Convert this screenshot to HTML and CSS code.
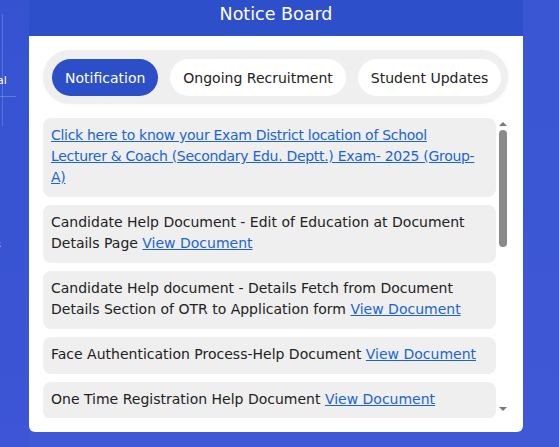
FILE: index.html
```html
<!DOCTYPE html>
<html lang="en">
<head>
  <meta charset="UTF-8">
  <title>Notice Board</title>
  <link rel="stylesheet" href="styles.css">
</head>
<body>
<div class="page">
  <!-- Striscia laterale del menu -->
  <aside class="side-menu">
    <span class="side-line"></span>
    <span class="side-text side-text-top">al</span>
    <span class="side-rule"></span>
    <span class="side-text side-text-mid">s</span>
  </aside>

  <section class="board">
    <header class="board-head">
      <h2 class="board-title">Notice Board</h2>
    </header>
    <div class="board-body">
      <div class="tabs">
        <button class="tab active">Notification</button>
        <button class="tab">Ongoing Recruitment</button>
        <button class="tab">Student Updates</button>
      </div>

      <div class="feed">
        <ul class="feed-list">
          <li class="feed-item feed-item-link">
            <a href="#">Click here to know your Exam District location of School Lecturer &amp; Coach (Secondary Edu. Deptt.) Exam- 2025 (Group-A)</a>
          </li>
          <li class="feed-item">
            Candidate Help Document - Edit of Education at Document Details Page <a href="#">View Document</a>
          </li>
          <li class="feed-item">
            Candidate Help document - Details Fetch from Document Details Section of OTR to Application form <a href="#">View Document</a>
          </li>
          <li class="feed-item">
            Face Authentication Process-Help Document <a href="#">View Document</a>
          </li>
          <li class="feed-item">
            One Time Registration Help Document <a href="#">View Document</a>
          </li>
        </ul>
        <div class="scroll">
          <span class="scroll-arrow up"></span>
          <span class="scroll-thumb"></span>
          <span class="scroll-track"></span>
          <span class="scroll-arrow down"></span>
        </div>
      </div>
    </div>
  </section>
</div>
</body>
</html>
```

FILE: styles.css
```css
/* Base */
html, body {
  margin: 0;
  height: 100%;
}

body {
  background: linear-gradient(180deg, #3a56d2, #3f58d6);
  font-family: "DejaVu Sans", "Noto Sans", sans-serif;
  color: #222;
  overflow: hidden;
}

.page {
  display: flex;
  height: 447px;
}

/* Menu laterale */
.side-menu {
  position: relative;
  width: 29px;
  flex-shrink: 0;
  background: linear-gradient(180deg, #3553d0, #3d55d6);
}

.side-line {
  position: absolute;
  left: 2px;
  top: 14px;
  width: 1px;
  height: 112px;
  background: rgba(255, 255, 255, 0.18);
}

.side-rule {
  position: absolute;
  left: 0;
  top: 96px;
  width: 16px;
  height: 1px;
  background: rgba(255, 255, 255, 0.22);
}

.side-text {
  position: absolute;
  left: -3px;
  color: #fff;
  font-size: 11px;
}

.side-text-top {
  top: 74px;
}

.side-text-mid {
  top: 238px;
  left: -5px;
}

/* Bacheca */
.board {
  width: 494px;
  height: 432px;
  display: flex;
  flex-direction: column;
}

.board-head {
  height: 36px;
  flex-shrink: 0;
  background: #2e4fca;
  display: flex;
  align-items: center;
  justify-content: center;
}

.board-title {
  margin: 0;
  color: #fff;
  font-size: 17.5px;
  font-weight: 500;
  padding-bottom: 9px;
}

.board-body {
  flex: 1;
  background: #fff;
  border-radius: 0 0 6px 6px;
  padding: 14px 15px 0 14px;
  display: flex;
  flex-direction: column;
  min-height: 0;
}

/* Schede */
.tabs {
  height: 54px;
  box-sizing: border-box;
  background: #efefef;
  border-radius: 27px;
  padding: 9px 9px;
  display: flex;
  gap: 12px;
  box-shadow: 0 0 4px rgba(0, 0, 0, 0.04);
}

.tab {
  border: 0;
  border-radius: 19px;
  background: #fff;
  font-family: inherit;
  font-size: 14px;
  color: #222;
  padding: 0 13px;
  height: 37px;
  white-space: nowrap;
  flex-shrink: 0;
}

.tab.active {
  background: #2c4fc8;
  color: #fff;
}

/* Elenco avvisi */
.feed {
  margin-top: 14px;
  height: 300px;
  display: flex;
  gap: 2px;
  overflow: hidden;
}

.feed-list {
  flex: 1;
  list-style: none;
  margin: 0;
  padding: 0;
  display: flex;
  flex-direction: column;
  gap: 8px;
  overflow: hidden;
}

.feed-item {
  background: #efefef;
  border-radius: 8px;
  padding: 7px 10px 9px 8px;
  font-size: 14px;
  line-height: 21px;
  flex-shrink: 0;
}

.feed-item-link {
  letter-spacing: -0.3px;
}

.feed-item a {
  color: #1a64d6;
  margin-left: 4px;
}

.feed-item a:first-child {
  margin-left: 0;
}

/* Barra di scorrimento disegnata */
.scroll {
  width: 10px;
  flex-shrink: 0;
  display: flex;
  flex-direction: column;
  align-items: center;
}

.scroll-arrow {
  width: 0;
  height: 0;
  border-left: 4px solid transparent;
  border-right: 4px solid transparent;
  margin: 4px 0;
}

.scroll-arrow.up {
  border-bottom: 4px solid #777;
}

.scroll-arrow.down {
  border-top: 4px solid #777;
  margin-bottom: 7px;
}

.scroll-thumb {
  width: 8px;
  height: 117px;
  border-radius: 4px;
  background: #8a8a8a;
}

.scroll-track {
  flex: 1;
}
```
